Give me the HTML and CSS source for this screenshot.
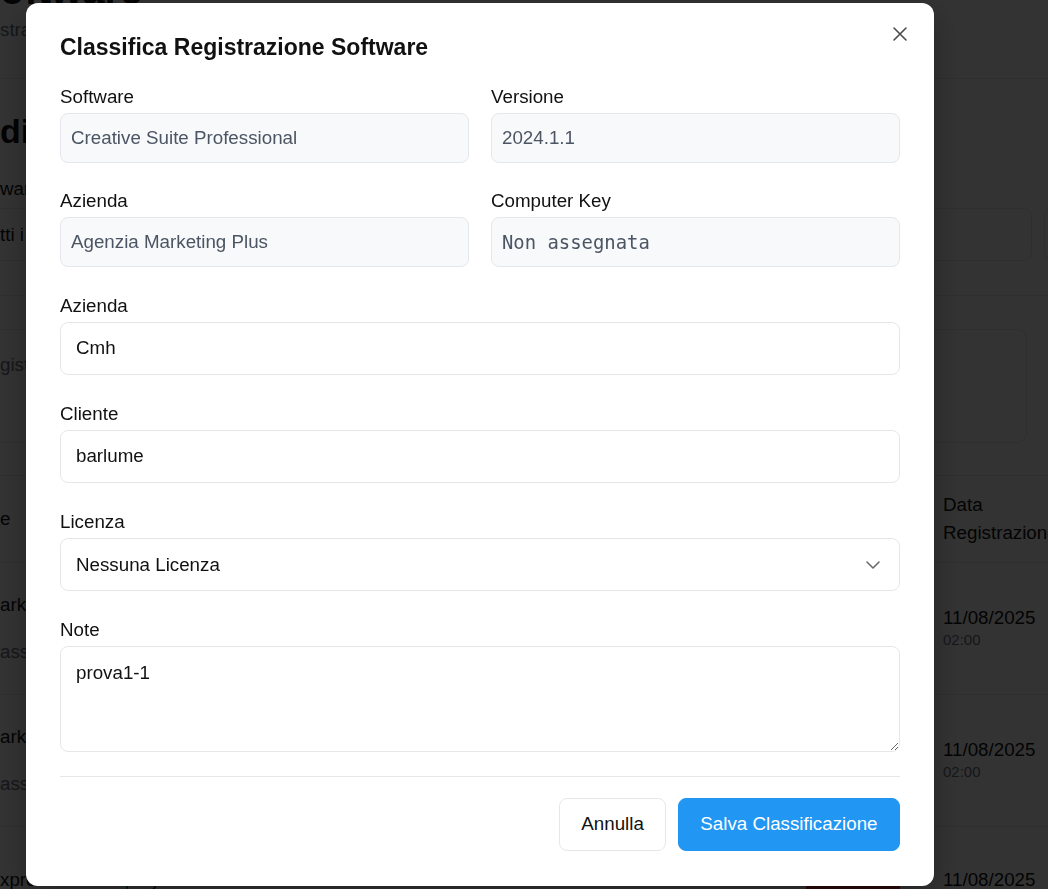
FILE: index.html
```html
<!DOCTYPE html>
<html lang="it">
<head>
<meta charset="utf-8">
<title>Classifica Registrazione Software</title>
<link rel="stylesheet" href="styles.css">
</head>
<body>
<div class="page">
  <header class="page-head">
    <h1 class="page-title">oftware</h1>
    <p class="page-sub">strazioni software</p>
  </header>

  <section class="filters">
    <h2 class="filters-title">dizioni</h2>
    <div class="filter-row">
      <div class="filter-field wide">
        <span class="filter-label">ware</span>
        <div class="filter-box cut">tti i software</div>
      </div>
      <div class="filter-field mid">
        <span class="filter-label">Stato</span>
        <div class="filter-box">Tutti</div>
      </div>
      <div class="filter-field tail">
        <div class="filter-box"></div>
      </div>
    </div>
  </section>

  <section class="stats">
    <div class="stats-card">gistrazioni totali</div>
  </section>

  <div class="table">
    <div class="trow thead">
      <div class="cell c1">e</div>
      <div class="cell c2">Azienda</div>
      <div class="cell c3">Versione</div>
      <div class="cell c4">Uso</div>
      <div class="cell c5">Crediti</div>
      <div class="cell c6">Stato</div>
      <div class="cell c7">Data Registrazione</div>
    </div>
    <div class="trow">
      <div class="cell c1"><div class="stack"><span>arketing</span><span class="muted">assegnata</span></div></div>
      <div class="cell c2">System</div>
      <div class="cell c3">2024.1.1</div>
      <div class="cell c4">0</div>
      <div class="cell c5 green">0 crediti</div>
      <div class="cell c6"><span class="badge">Non</span></div>
      <div class="cell c7"><div class="stack tight"><span>11/08/2025</span><span class="time">02:00</span></div></div>
    </div>
    <div class="trow">
      <div class="cell c1"><div class="stack"><span>arketing</span><span class="muted">assegnata</span></div></div>
      <div class="cell c2">System</div>
      <div class="cell c3">2024.1.1</div>
      <div class="cell c4">0</div>
      <div class="cell c5 green">0 crediti</div>
      <div class="cell c6"><span class="badge">Non</span></div>
      <div class="cell c7"><div class="stack tight"><span>11/08/2025</span><span class="time">02:00</span></div></div>
    </div>
    <div class="trow last">
      <div class="cell c1">xpress</div>
      <div class="cell c2"><span class="tag">System</span></div>
      <div class="cell c3">6.0.1</div>
      <div class="cell c4">0</div>
      <div class="cell c5 green">0 crediti</div>
      <div class="cell c6"><span class="badge">Non</span></div>
      <div class="cell c7">11/08/2025</div>
    </div>
  </div>
</div>

<div class="overlay">
  <div class="modal" role="dialog" aria-labelledby="mtitle">
    <button class="close" type="button" aria-label="Chiudi">
      <svg viewBox="0 0 18 18" width="18" height="18"><path d="M3 3 L15 15 M15 3 L3 15" stroke="#4b4b4b" stroke-width="1.6" stroke-linecap="round" fill="none"/></svg>
    </button>
    <h2 class="modal-title" id="mtitle">Classifica Registrazione Software</h2>

    <div class="grid2">
      <div class="field">
        <label class="label">Software</label>
        <div class="ro">Creative Suite Professional</div>
      </div>
      <div class="field">
        <label class="label">Versione</label>
        <div class="ro">2024.1.1</div>
      </div>
      <div class="field">
        <label class="label">Azienda</label>
        <div class="ro">Agenzia Marketing Plus</div>
      </div>
      <div class="field">
        <label class="label">Computer Key</label>
        <div class="ro mono">Non assegnata</div>
      </div>
    </div>

    <div class="field group">
      <label class="label" for="az">Azienda</label>
      <input class="inp" id="az" type="text" value="Cmh">
    </div>
    <div class="field group">
      <label class="label" for="cl">Cliente</label>
      <input class="inp" id="cl" type="text" value="barlume">
    </div>
    <div class="field group">
      <label class="label" for="lic">Licenza</label>
      <div class="select-wrap">
        <select class="inp sel" id="lic"><option>Nessuna Licenza</option></select>
        <svg class="chev" viewBox="0 0 16 10" width="16" height="10"><path d="M2 2 L8 8 L14 2" stroke="#6b6b6b" stroke-width="1.6" fill="none" stroke-linecap="round" stroke-linejoin="round"/></svg>
      </div>
    </div>
    <div class="field group">
      <label class="label" for="nt">Note</label>
      <textarea class="inp ta" id="nt">prova1-1</textarea>
    </div>

    <div class="footer">
      <button class="btn ghost" type="button">Annulla</button>
      <button class="btn primary" type="button">Salva Classificazione</button>
    </div>
  </div>
</div>
</body>
</html>
```

FILE: styles.css
```css
* { box-sizing: border-box; margin: 0; padding: 0; }
html, body { height: 100%; }
body {
  font-family: "Liberation Sans", Arial, sans-serif;
  font-size: 18.75px;
  color: #111;
  background: #fff;
  overflow: hidden;
}

/* ---------- background page ---------- */
.page { width: 1048px; height: 889px; overflow: hidden; }
.page-head { display: flow-root; height: 79px; border-bottom: 1px solid #e5e7eb; }
.page-title { font-size: 40px; line-height: 40px; margin-top: -30px; font-weight: 700; white-space: nowrap; }
.page-sub { color: #6b7280; line-height: 22px; margin-top: 9px; white-space: nowrap; }

.filters { display: flow-root; height: 217px; border-bottom: 1px solid #e5e7eb; padding-top: 32px; }
.filters-title { font-size: 34px; line-height: 40px; font-weight: 700; white-space: nowrap; }
.filter-row { display: flex; align-items: flex-end; gap: 12px; margin-top: 27px; }
.filter-field { display: flex; flex-direction: column; gap: 8px; flex-shrink: 0; }
.filter-field.wide { width: 500px; }
.filter-field.mid { width: 520px; }
.filter-field.tail { width: 250px; }
.filter-label { line-height: 22px; white-space: nowrap; }
.filter-box {
  height: 53px; border: 1px solid #e5e7eb; border-radius: 8px;
  display: flex; align-items: center; padding: 0 15px; white-space: nowrap;
}
.filter-box.cut { border-left: 0; border-radius: 0 8px 8px 0; padding-left: 0; }

.stats { display: flow-root; height: 180px; border-bottom: 1px solid #e5e7eb; padding-top: 33px; }
.stats-card {
  height: 114px; margin-right: 21px; border: 1px solid #e5e7eb; border-left: 0;
  border-radius: 0 10px 10px 0; padding-top: 24px; line-height: 22px; white-space: nowrap;
  color: #6b7280;
}

.table { display: flex; flex-direction: column; }
.trow {
  display: grid;
  grid-template-columns: 110px 280px 170px 130px 100px 137px 1fr;
  height: 132px; border-bottom: 1px solid #e5e7eb; align-items: center; flex-shrink: 0;
}
.trow.thead { height: 87px; }
.trow.last { height: 106px; border-bottom: 0; }
.cell { padding-left: 16px; white-space: nowrap; line-height: 22px; }
.cell.c1 { padding-left: 0; }
.thead .c7 { white-space: normal; line-height: 28px; width: 140px; }
.stack { display: flex; flex-direction: column; gap: 25px; }
.stack.tight { gap: 0; }
.muted { color: #6b7280; }
.time { color: #6b7280; font-size: 15px; line-height: 22px; }
.green { color: #15803d; }
.badge { display: inline-block; background: #dc2626; color: #fff; padding: 4px 30px; border-radius: 4px; }
.tag { border-left: 2px solid #16a34a; padding-left: 10px; }

/* ---------- modal ---------- */
.overlay {
  position: fixed; inset: 0; background: rgba(0, 0, 0, 0.8);
  display: flex; align-items: center; padding-left: 26px;
}
.modal {
  position: relative; width: 908px; background: #fff; border-radius: 12px;
  padding: 30px 34px 35px; margin-top: -1px;
  box-shadow: 0 10px 30px rgba(0,0,0,0.3);
}
.close {
  position: absolute; top: 22px; right: 25px; width: 18px; height: 18px;
  border: 0; background: none; cursor: pointer; display: flex;
}
.modal-title { font-size: 23px; line-height: 28px; font-weight: 700; color: #111; margin-bottom: 25px; }

.grid2 { display: grid; grid-template-columns: 1fr 1fr; column-gap: 22px; row-gap: 27px; }
.field { display: flex; flex-direction: column; }
.group { margin-top: 28px; }
.label { line-height: 22px; margin-bottom: 5px; color: #111; }

.ro {
  height: 50px; border: 1px solid #e5e7eb; border-radius: 8px; background: #f8f9fa;
  color: #4b5563; padding: 0 10px; display: flex; align-items: center;
}
.ro.mono { font-family: "DejaVu Sans Mono", "Liberation Mono", monospace; font-size: 18.9px; }

.inp {
  height: 53px; width: 100%; border: 1px solid #e5e7eb; border-radius: 8px; background: #fff;
  color: #111; padding: 0 15px; font: inherit; font-size: 18.75px; outline: none;
}
.select-wrap { position: relative; }
.sel { appearance: none; -webkit-appearance: none; }
.chev { position: absolute; right: 19px; top: 22px; pointer-events: none; }
.ta { height: 106px; padding: 15px; line-height: 22px; resize: vertical; display: block; }

.footer {
  margin-top: 24px; border-top: 1px solid #e5e7eb; padding-top: 21px;
  display: flex; justify-content: flex-end; gap: 12px;
}
.btn {
  height: 53px; padding: 0 21px; border-radius: 8px; font: inherit; font-size: 18.75px; cursor: pointer;
  border: 1px solid #e5e7eb;
}
.btn.ghost { background: #fff; color: #111; }
.btn.primary { background: #2196f3; border-color: #2196f3; color: #fff; padding: 0 21.5px; }
```
